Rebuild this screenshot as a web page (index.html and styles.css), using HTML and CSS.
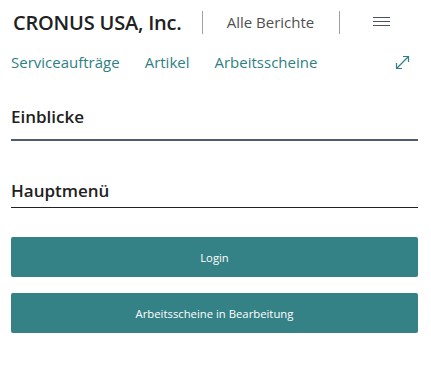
FILE: index.html
```html
<!DOCTYPE html>
<html lang="de">
<head>
<meta charset="utf-8">
<link rel="stylesheet" href="styles.css">
</head>
<body>
<div class="page">
  <header class="topbar">
    <div class="company">CRONUS USA, Inc.</div>
    <div class="sep"></div>
    <div class="reports">Alle Berichte</div>
    <div class="sep"></div>
    <div class="menu">
      <svg width="17" height="10" viewBox="0 0 17 10"><path d="M0 0.5H17M0 4.5H17M0 8.5H17" stroke="#4a5263" stroke-width="1.2"/></svg>
    </div>
  </header>
  <nav class="navrow">
    <a class="navlink">Serviceaufträge</a>
    <a class="navlink">Artikel</a>
    <a class="navlink">Arbeitsscheine</a>
    <span class="expand">
      <svg width="15" height="15" viewBox="0 0 15 15"><path d="M1.5 13.5L13.5 1.5M8 1.5H13.5V7M1.5 8V13.5H7" fill="none" stroke="#2f7f84" stroke-width="1.2"/></svg>
    </span>
  </nav>
  <section class="group">
    <h2 class="group-title insights">Einblicke</h2>
  </section>
  <section class="group">
    <h2 class="group-title main">Hauptmenü</h2>
  </section>
  <div class="actions">
    <button class="btn">Login</button>
    <button class="btn">Arbeitsscheine in Bearbeitung</button>
  </div>
</div>
</body>
</html>
```

FILE: styles.css
```css
html, body {
  margin: 0;
  padding: 0;
  background: #ffffff;
}
.page {
  font-family: "Open Sans", "Noto Sans", sans-serif;
  padding: 0 13px 0 11px;
}
.topbar {
  display: flex;
  align-items: center;
  height: 44px;
  padding-left: 2px;
}
.company {
  font-size: 20px;
  font-weight: 600;
  color: #212121;
  letter-spacing: -0.2px;
}
.sep {
  width: 1px;
  height: 23px;
  background: #a0a0a0;
  margin: 0 24px 0 22px;
}
.company + .sep {
  margin-left: 20px;
}
.reports {
  font-size: 15px;
  color: #505050;
  margin-right: 3px;
}
.menu {
  display: flex;
  margin-left: 9px;
}
.navrow {
  display: flex;
  align-items: center;
  height: 36px;
  margin-top: 0;
}
.navlink {
  font-size: 15px;
  color: #2f7f84;
  margin-right: 25px;
}
.expand {
  margin-left: auto;
  display: flex;
  margin-right: 8px;
}
.group {
  margin-top: 0;
}
.group-title {
  margin: 0;
  font-size: 17px;
  font-weight: 600;
  color: #212121;
}
.insights {
  padding-top: 25px;
  padding-bottom: 11px;
  border-bottom: 2px solid #505c6d;
}
.main {
  padding-top: 38px;
  padding-bottom: 5px;
  border-bottom: 1px solid #212121;
}
.actions {
  display: flex;
  flex-direction: column;
  gap: 16px;
  margin-top: 29px;
}
.btn {
  height: 40px;
  border: none;
  border-radius: 2px;
  background: #358286;
  color: #ffffff;
  font-family: "Open Sans", "Noto Sans", sans-serif;
  font-size: 11.3px;
}
```
